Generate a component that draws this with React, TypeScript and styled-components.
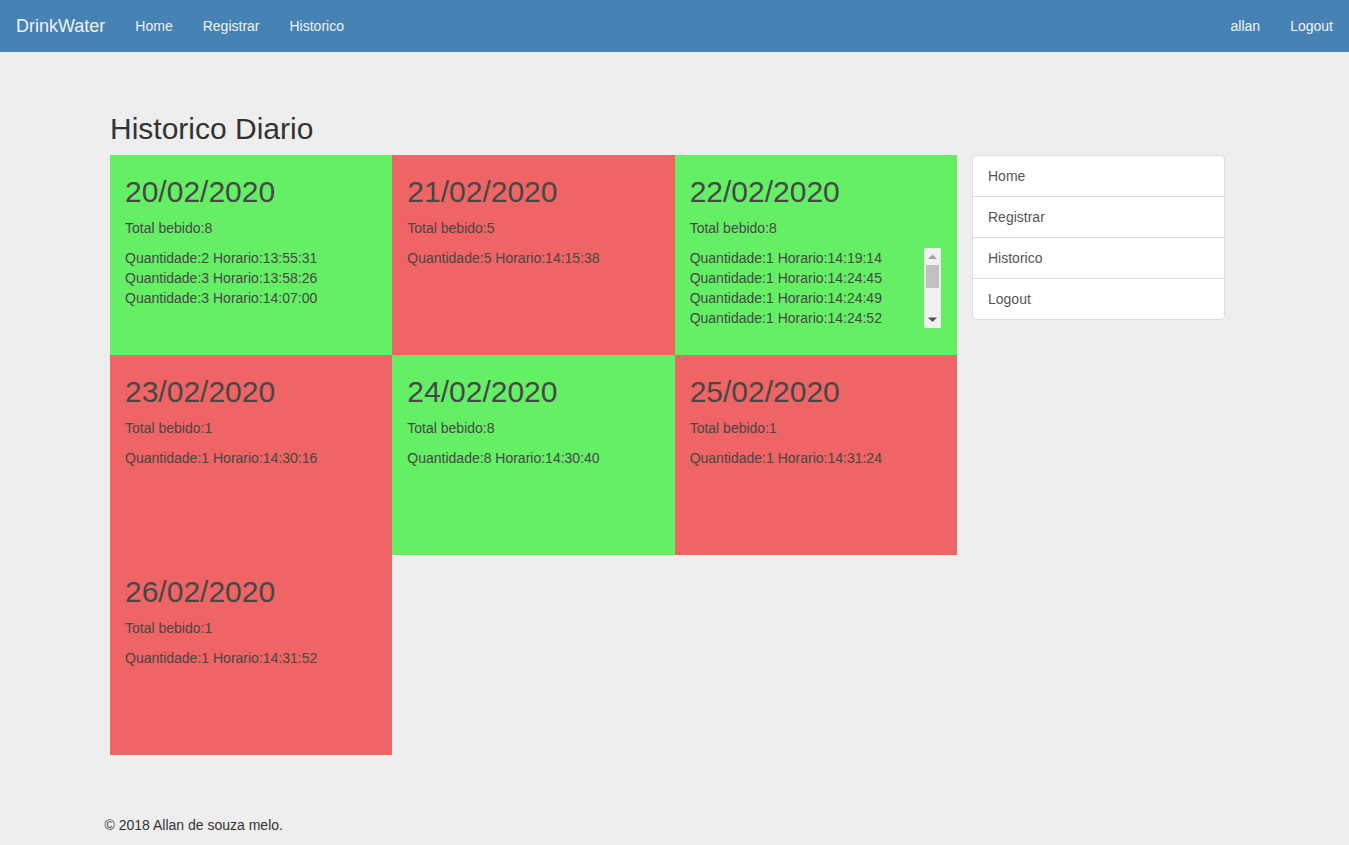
import React from "react";
import styled, { createGlobalStyle } from "styled-components";

const GlobalStyle = createGlobalStyle`
  html, body { margin: 0; padding: 0; }
  body {
    background: #eeeeee;
    font-family: "Liberation Sans", Arial, Helvetica, sans-serif;
    font-size: 14px;
    line-height: 1.42857;
    color: #333;
  }
  * { box-sizing: border-box; }
`;

const NavBar = styled.nav`
  height: 52px;
  background: #4682b4;
  display: flex;
  align-items: flex-start;
  justify-content: space-between;
  padding-right: 1px;
`;

const NavGroup = styled.div`
  display: flex;
  align-items: center;
`;

const Brand = styled.a`
  font-size: 18px;
  line-height: 20px;
  padding: 16px 15px 15px 16px;
  color: #f2f2f2;
  text-decoration: none;
`;

const NavLink = styled.a`
  font-size: 14px;
  line-height: 20px;
  padding: 16px 15px 15px;
  color: #f2f2f2;
  text-decoration: none;
`;

const Container = styled.main`
  width: 1140px;
  margin: 0 auto;
  padding-top: 60px;
`;

const Inner = styled.div`
  padding-left: 5.5px;
`;

const Title = styled.h2`
  font-size: 30px;
  font-weight: 400;
  line-height: 33px;
  margin: 0 0 10px;
  color: #333;
`;

const Layout = styled.div`
  display: flex;
  align-items: flex-start;
  gap: 15px;
`;

const Grid = styled.div`
  width: 847px;
  display: grid;
  grid-template-columns: repeat(3, 1fr);
`;

const Card = styled.section<{ $ok: boolean }>`
  height: 200px;
  padding: 0 15px;
  background: ${(p) => (p.$ok ? "#64ef64" : "#ef6464")};
  color: #474747;
  overflow: hidden;
`;

const CardDate = styled.h2`
  font-size: 30px;
  font-weight: 400;
  line-height: 33px;
  margin: 20px 0 10px;
`;

const Total = styled.p`
  margin: 0 0 10px;
  line-height: 20px;
`;

const ScrollBox = styled.div`
  display: flex;
  align-items: flex-start;
  max-height: 80px;
  padding-right: 1px;
`;

const Entries = styled.ul`
  flex: 1;
  list-style: none;
  margin: 0;
  padding: 0;
  max-height: 80px;
  overflow-y: auto;
  scrollbar-width: none;
  line-height: 20px;
  &::-webkit-scrollbar { display: none; }
`;

const Track = styled.div`
  width: 17px;
  height: 80px;
  background: #f1f1f1;
  display: flex;
  flex-direction: column;
  align-items: center;
`;

const Arrow = styled.svg`
  display: block;
  width: 17px;
  height: 17px;
  flex: none;
`;

const Thumb = styled.div`
  width: 13px;
  height: 23px;
  background: #c1c1c1;
  flex: none;
`;

const Spacer = styled.div`
  flex: 1;
`;

const Sidebar = styled.div`
  width: 253px;
  background: #fff;
  border: 1px solid #ddd;
  border-radius: 4px;
  display: flex;
  flex-direction: column;
`;

const SideItem = styled.a`
  display: block;
  padding: 10px 15px;
  line-height: 20px;
  color: #555;
  text-decoration: none;
  & + & { border-top: 1px solid #ddd; }
`;

const Footer = styled.footer`
  margin-top: 60px;
  padding-bottom: 10px;
  line-height: 20px;
  color: #333;
`;

type Day = { date: string; entries: [number, string][] };

const days: Day[] = [
  { date: "20/02/2020", entries: [[2, "13:55:31"], [3, "13:58:26"], [3, "14:07:00"]] },
  { date: "21/02/2020", entries: [[5, "14:15:38"]] },
  {
    date: "22/02/2020",
    entries: [
      [1, "14:19:14"], [1, "14:24:45"], [1, "14:24:49"], [1, "14:24:52"],
      [1, "14:24:56"], [1, "14:25:01"], [1, "14:25:05"], [1, "14:25:09"],
    ],
  },
  { date: "23/02/2020", entries: [[1, "14:30:16"]] },
  { date: "24/02/2020", entries: [[8, "14:30:40"]] },
  { date: "25/02/2020", entries: [[1, "14:31:24"]] },
  { date: "26/02/2020", entries: [[1, "14:31:52"]] },
];

const GOAL = 8;
const VISIBLE = 4;

function FakeScrollbar() {
  return (
    <Track>
      <Arrow viewBox="0 0 17 17">
        <polygon points="4,11 8.5,6.5 13,11" fill="#a3a3a3" />
      </Arrow>
      <Thumb />
      <Spacer />
      <Arrow viewBox="0 0 17 17">
        <polygon points="4,6.5 8.5,11 13,6.5" fill="#505050" />
      </Arrow>
    </Track>
  );
}

export default function App() {
  return (
    <>
      <GlobalStyle />
      <NavBar>
        <NavGroup>
          <Brand href="#">DrinkWater</Brand>
          <NavLink href="#">Home</NavLink>
          <NavLink href="#">Registrar</NavLink>
          <NavLink href="#">Historico</NavLink>
        </NavGroup>
        <NavGroup>
          <NavLink href="#">allan</NavLink>
          <NavLink href="#">Logout</NavLink>
        </NavGroup>
      </NavBar>
      <Container>
        <Inner>
          <Title>Historico Diario</Title>
          <Layout>
            <Grid>
              {days.map((d) => {
                const total = d.entries.reduce((s, e) => s + e[0], 0);
                const overflow = d.entries.length > VISIBLE;
                return (
                  <Card key={d.date} $ok={total >= GOAL}>
                    <CardDate>{d.date}</CardDate>
                    <Total>Total bebido:{total}</Total>
                    <ScrollBox>
                      <Entries>
                        {d.entries.map(([q, h], i) => (
                          <li key={i}>
                            Quantidade:{q} Horario:{h}
                          </li>
                        ))}
                      </Entries>
                      {overflow && <FakeScrollbar />}
                    </ScrollBox>
                  </Card>
                );
              })}
            </Grid>
            <Sidebar>
              <SideItem href="#">Home</SideItem>
              <SideItem href="#">Registrar</SideItem>
              <SideItem href="#">Historico</SideItem>
              <SideItem href="#">Logout</SideItem>
            </Sidebar>
          </Layout>
        </Inner>
        <Footer>© 2018 Allan de souza melo.</Footer>
      </Container>
    </>
  );
}
